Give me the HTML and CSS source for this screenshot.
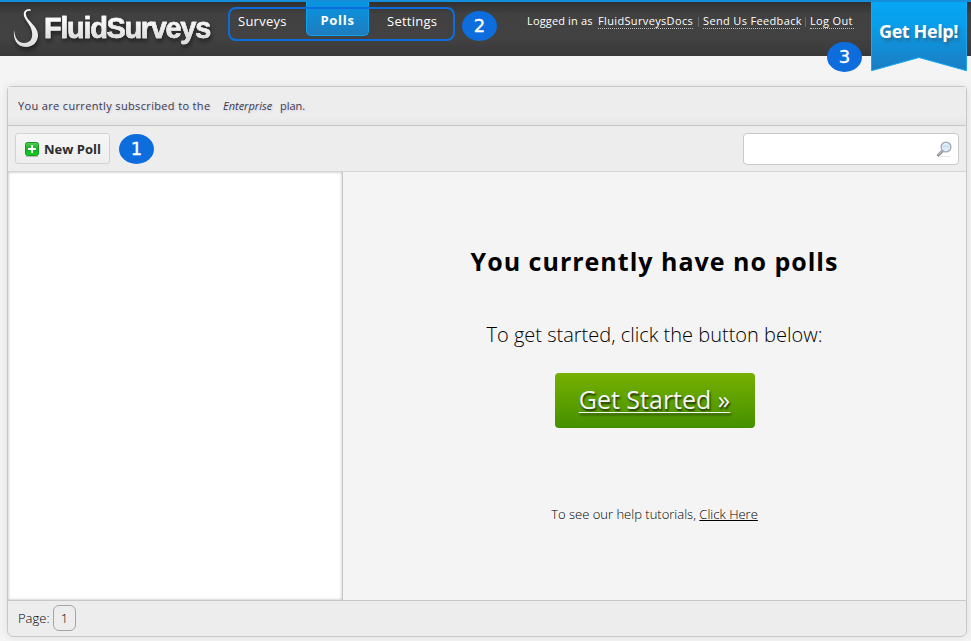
FILE: index.html
```html
<!DOCTYPE html>
<html lang="en">
<head>
<meta charset="utf-8">
<title>FluidSurveys - Polls</title>
<link rel="stylesheet" href="styles.css">
</head>
<body>
<header class="topbar">
  <a class="logo">
    <svg class="logo-mark" width="26" height="39" viewBox="0 0 26 39" aria-hidden="true">
      <defs><linearGradient id="silver" x1="0" y1="0" x2="0" y2="1"><stop offset="0" stop-color="#fff"/><stop offset="1" stop-color="#dedede"/></linearGradient></defs>
      <path fill="url(#silver)" d="M17 0C12 0 10 3 11 7C12 11 18 16 19 23C20 30 17 34 11 34C5 34 2 29 1 21C0 29 3 38 13 38C20 38 25 33 25 26C25 17 14 12 13 6C12 3 14 1 18 2Z"/>
    </svg>
    <span class="logo-text">FluidSurveys</span>
  </a>
  <nav class="nav">
    <a class="nav-item surveys">Surveys</a>
    <a class="nav-item active">Polls</a>
    <a class="nav-item settings">Settings</a>
    <span class="nav-outline"></span>
  </nav>
  <span class="badge badge-nav">2</span>
  <div class="account"><span class="logged">Logged in as</span><a class="user">FluidSurveysDocs</a><i></i><a class="feedback">Send Us Feedback</a><i></i><a class="logout">Log Out</a></div>
  <span class="badge badge-help">3</span>
  <a class="help">
    <svg width="96" height="70" viewBox="0 0 96 70" aria-hidden="true">
      <defs><linearGradient id="ribbon" x1="0" y1="0" x2="0" y2="1"><stop offset="0" stop-color="#07a6f4"/><stop offset=".3" stop-color="#07a0ec"/><stop offset="1" stop-color="#1c7cc1"/></linearGradient></defs>
      <path d="M.5-1V68.7L48 55.5L95.500 68.700V-1Z" fill="url(#ribbon)" stroke="#16a9f2"/>
    </svg>
    <span>Get Help!</span>
  </a>
</header>
<main class="panel">
  <div class="notice"><span class="notice-a">You are currently subscribed to the</span><em>Enterprise</em><span class="notice-b">plan.</span></div>
  <div class="toolbar">
    <button class="new-poll">
      <svg width="14" height="15" viewBox="0 0 14 15" aria-hidden="true">
        <defs><linearGradient id="plus" x1="0" y1="0" x2="0" y2="1"><stop offset="0" stop-color="#53cf53"/><stop offset=".5" stop-color="#15ae22"/><stop offset="1" stop-color="#0bd61c"/></linearGradient></defs>
        <path d="M1 14.500H13" stroke="#bbb"/>
        <rect x=".5" y=".5" width="13" height="13" rx="2" fill="url(#plus)" stroke="#169a24"/>
        <path d="M7 3V11M3 7H11" stroke="#fff" stroke-width="2"/>
      </svg>
      <span>New Poll</span>
    </button>
    <span class="badge">1</span>
    <label class="search">
      <input type="text" aria-label="Search">
      <svg width="17" height="17" viewBox="0 0 17 17" aria-hidden="true">
        <path d="M4 15.500H14" stroke="#e5e5e5"/>
        <path d="M1.500 15L6.500 10" stroke="#858585" stroke-width="2.600"/>
        <path d="M2 14.300L6 10.300" stroke="#ddd"/>
        <circle cx="10" cy="6" r="4.900" fill="#dcecf9" stroke="#a3a7b3" stroke-width="1.300"/>
        <path d="M7 6Q10 4 13 6" fill="none" stroke="#b9d4ed"/>
      </svg>
    </label>
  </div>
  <div class="content">
    <aside class="list"></aside>
    <section class="empty">
      <h1>You currently have no polls</h1>
      <p class="lead">To get started, click the button below:</p>
      <a class="start">Get Started »</a>
      <p class="tutorials">To see our help tutorials, <a>Click Here</a></p>
    </section>
  </div>
  <footer class="pager"><span>Page:</span><a>1</a></footer>
</main>
</body>
</html>
```
FILE: styles.css
```css
* { box-sizing: border-box; }
body {
  margin: 0;
  height: 641px;
  overflow: hidden;
  background: #f4f4f4;
  font-family: "Open Sans", "Noto Sans", sans-serif;
  color: #000;
}
.topbar {
  position: relative;
  display: flex;
  height: 56px;
  border-top: 2px solid #128fd8;
  background: linear-gradient(#303030, #414141 12px, #424242 36px, #383838);
}
.logo {
  display: flex;
  width: 228px;
  padding: 7px 0 0 13px;
  filter: drop-shadow(1px 3px 2px rgba(0, 0, 0, .5));
}
.logo-text {
  margin: 2px 0 0 5px;
  height: 34px;
  font: bold 29px/34px "Liberation Sans", sans-serif;
  letter-spacing: -1.35px;
  color: transparent;
  background: linear-gradient(#fff 20%, #dcdcdc 80%);
  background-clip: text;
  -webkit-text-stroke: .5px #eee;
}
.nav {
  position: relative;
  display: flex;
  width: 227px;
  color: #fff;
  font-size: 13px;
  white-space: nowrap;
}
.nav-item { line-height: 18px; padding-top: 10px; letter-spacing: .25px; }
.surveys { width: 78px; padding-left: 10px; }
.active {
  width: 63px;
  height: 34px;
  padding-top: 9px;
  text-align: center;
  font-weight: bold;
  letter-spacing: .7px;
  border: 1px solid #0ea2ee;
  border-top: 0;
  border-radius: 0 0 5px 5px;
  background: linear-gradient(#0795e2, #1f7cbd);
}
.settings { padding-left: 18px; }
.nav-outline {
  position: absolute;
  inset: 5px 0 auto 0;
  height: 34px;
  border: 2px solid #0e6ddd;
  border-radius: 8px;
}
.badge {
  flex: none;
  width: 35px;
  height: 30px;
  border-radius: 50%;
  background: #0e6ddd;
  color: #fff;
  font: 18px/30px "DejaVu Sans", sans-serif;
  -webkit-text-stroke: .35px #fff;
  text-align: center;
}
.badge-nav { margin: 9px 0 0 7px; }
.account {
  display: flex;
  align-items: flex-start;
  margin: 12px 0 0 30px;
  color: #fff;
  font-size: 11px;
  line-height: 14px;
  white-space: nowrap;
}
.account a { height: 15px; border-bottom: 1px dotted #bbb; }
.account i { width: 1px; height: 10px; margin: 3px 4px 0 5px; background: #696969; }
.logged { width: 71px; letter-spacing: .15px; }
.user { width: 95px; letter-spacing: .35px; }
.feedback { width: 97px; letter-spacing: .35px; }
.logout { width: 44px; letter-spacing: .35px; }
.badge-help { position: absolute; left: 827px; top: 40px; }
.help { position: absolute; left: 871px; top: 0; width: 96px; height: 70px; }
.help svg { display: block; }
.help span {
  position: absolute;
  left: 8px;
  top: 17px;
  color: #fff;
  font: bold 18px/24px "Open Sans", sans-serif;
  letter-spacing: -.4px;
  white-space: nowrap;
  text-shadow: 2px 3px 3px rgba(60, 80, 100, .6);
}
.panel {
  display: flex;
  flex-direction: column;
  margin: 30px 4px 0 7px;
  height: 551px;
  border: 1px solid #c8c8c8;
  border-radius: 4px 4px 6px 6px;
  background: #ededed;
  box-shadow: 0 0 8px rgba(0, 0, 0, .09);
}
.notice {
  display: flex;
  height: 39px;
  padding: 0 0 0 10px;
  border-bottom: 1px solid #c8c8c8;
  background: linear-gradient(#ededed 80%, #e5e5e5);
  color: #3d3b49;
  font-size: 11px;
  line-height: 38px;
  white-space: nowrap;
  text-shadow: 1px 1px 2px #cbcbea;
}
.notice-a { width: 205px; letter-spacing: .35px; }
.notice em { width: 57px; }
.toolbar {
  display: flex;
  height: 46px;
  padding: 7px;
  border-bottom: 1px solid #d4d4d4;
}
.new-poll {
  display: flex;
  gap: 5px;
  width: 95px;
  height: 31px;
  padding: 8px 0 0 9px;
  border: 1px solid #d2d2d2;
  border-radius: 3px;
  background: linear-gradient(#f6f6f6, #eee);
  color: #2c2c2c;
  font: bold 13px/14px "Open Sans", sans-serif;
  white-space: nowrap;
}
.toolbar .badge { margin: 1px 0 0 9px; }
.search {
  display: flex;
  align-items: center;
  width: 216px;
  height: 32px;
  margin-left: auto;
  padding-right: 5px;
  border: 1px solid #c9c9c9;
  border-radius: 4px;
  background: #fff;
}
.search input { flex: 1; min-width: 0; border: 0; background: none; outline: 0; }
.content { display: flex; height: 428px; background: #f4f4f4; }
.list {
  width: 335px;
  border-right: 1px solid #c8c8c8;
  background: #fff;
  box-shadow: inset 0 0 3px rgba(0, 0, 0, .3);
}
.empty {
  flex: 1;
  display: flex;
  flex-direction: column;
  align-items: center;
  white-space: nowrap;
}
h1 {
  margin: 71px 0 0;
  font: bold 25px/36px "Open Sans", sans-serif;
  letter-spacing: 1px;
}
.lead { margin: 42px 0 0; font-size: 20px; line-height: 28px; font-weight: 300; }
.start {
  width: 200px;
  height: 55px;
  margin-top: 24px;
  border-radius: 4px;
  background: linear-gradient(#76b000, #459000);
  color: #f5f5f5;
  font-size: 25px;
  line-height: 53px;
  text-align: center;
  text-decoration: underline;
  text-decoration-thickness: 1px;
  text-underline-offset: 3px;
  text-shadow: 1px 2px 2px rgba(0, 0, 0, .7);
}
.tutorials { margin: 77px 0 0; font-size: 13px; line-height: 18px; font-weight: 300; }
.tutorials a { text-decoration: underline; }
.pager {
  display: flex;
  height: 36px;
  padding: 4px 10px;
  border-top: 1px solid #c8c8c8;
  font-size: 13px;
  font-weight: 300;
  line-height: 26px;
}
.pager span { width: 35px; }
.pager a {
  width: 23px;
  height: 26px;
  border: 1px solid #a5a5a5;
  border-radius: 6px;
  line-height: 25px;
  text-align: center;
}
```
